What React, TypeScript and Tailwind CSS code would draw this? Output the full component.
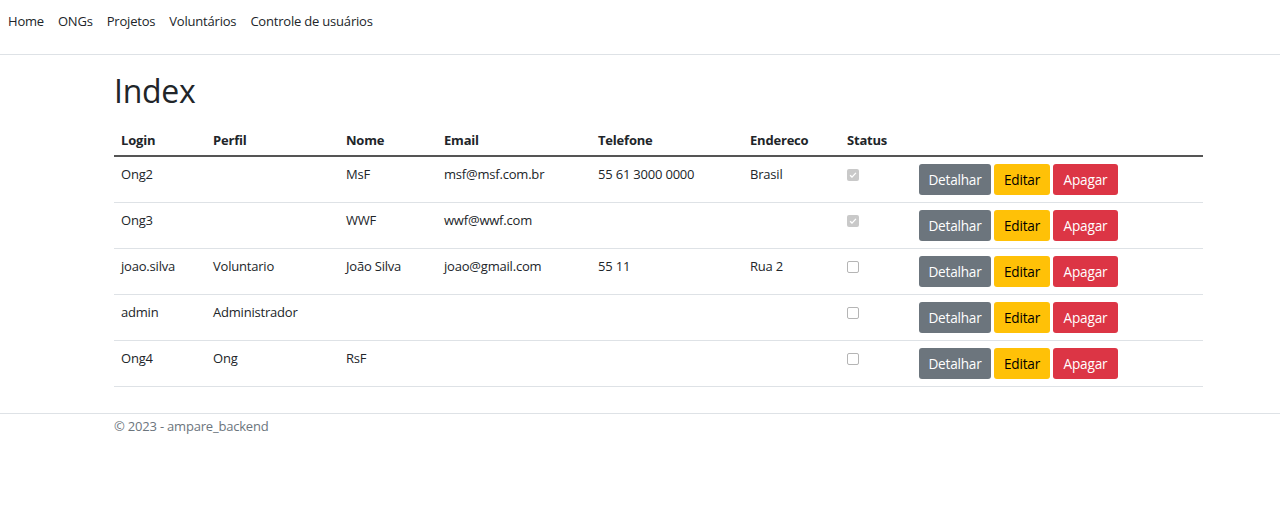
const rows = [
  { login: "Ong2", perfil: "", nome: "MsF", email: "msf@msf.com.br", tel: "55 61 3000 0000", end: "Brasil", ok: true },
  { login: "Ong3", perfil: "", nome: "WWF", email: "wwf@wwf.com", tel: "", end: "", ok: true },
  { login: "joao.silva", perfil: "Voluntario", nome: "João Silva", email: "joao@gmail.com", tel: "55 11", end: "Rua 2", ok: false },
  { login: "admin", perfil: "Administrador", nome: "", email: "", tel: "", end: "", ok: false },
  { login: "Ong4", perfil: "Ong", nome: "RsF", email: "", tel: "", end: "", ok: false },
];

function Check({ on }: { on: boolean }) {
  if (on) {
    return (
      <span className="mt-[5px] flex h-[12px] w-[12px] items-center justify-center rounded-[2px] bg-[#c9c9c9]">
        <svg viewBox="0 0 12 12" className="h-[10px] w-[10px]">
          <path d="M2.5 6.2l2.3 2.3 4.7-5" fill="none" stroke="#fff" strokeWidth="1.6" />
        </svg>
      </span>
    );
  }
  return <span className="mt-[5px] block h-[12px] w-[12px] rounded-[2px] border border-[#b5b5b5] bg-white" />;
}

export default function App() {
  return (
    <div className="min-h-screen bg-white text-[13px] leading-[1.55] tracking-[-0.2px] text-[#212529]" style={{ fontFamily: '"Open Sans", "Noto Sans", sans-serif' }}>
      {/* Nav */}
      <nav className="flex h-[55px] items-start border-b border-[#dee2e6] pl-[1px] pt-[11px]">
        {["Home", "ONGs", "Projetos", "Voluntários", "Controle de usuários"].map((l) => (
          <a key={l} className="px-[7px] text-[#212529]">
            {l}
          </a>
        ))}
      </nav>

      <main className="ml-[114px] w-[1089px] pt-[16px]">
        <h1 className="mb-[16px] text-[32px] leading-[1.25] font-normal tracking-[-0.3px]">Index</h1>

        <table className="w-full table-fixed border-collapse">
          <colgroup>
            <col className="w-[92px]" />
            <col className="w-[133px]" />
            <col className="w-[98px]" />
            <col className="w-[154px]" />
            <col className="w-[152px]" />
            <col className="w-[97px]" />
            <col className="w-[72px]" />
            <col />
          </colgroup>
          <thead>
            <tr className="border-b-2 border-[#555]">
              {["Login", "Perfil", "Nome", "Email", "Telefone", "Endereco", "Status", ""].map((h, i) => (
                <th key={i} className="px-[7px] pt-[3px] pb-[5px] text-left font-bold">
                  {h}
                </th>
              ))}
            </tr>
          </thead>
          <tbody>
            {rows.map((r) => (
              <tr key={r.login} className="border-b border-[#dee2e6] align-top">
                <td className="px-[7px] py-[7px]">{r.login}</td>
                <td className="px-[7px] py-[7px]">{r.perfil}</td>
                <td className="px-[7px] py-[7px]">{r.nome}</td>
                <td className="px-[7px] py-[7px]">{r.email}</td>
                <td className="px-[7px] py-[7px]">{r.tel}</td>
                <td className="px-[7px] py-[7px]">{r.end}</td>
                <td className="px-[7px] py-[7px]">
                  <Check on={r.ok} />
                </td>
                <td className="px-[7px] py-[7px]">
                  <div className="flex gap-[3px]">
                    <button className="flex h-[31px] w-[72px] items-center justify-center rounded-[3px] bg-[#6c757d] text-[13.6px] text-white">Detalhar</button>
                    <button className="flex h-[31px] w-[56px] items-center justify-center rounded-[3px] bg-[#ffc107] text-[13.6px] text-black">Editar</button>
                    <button className="flex h-[31px] w-[65px] items-center justify-center rounded-[3px] bg-[#dc3545] text-[13.6px] text-white">Apagar</button>
                  </div>
                </td>
              </tr>
            ))}
          </tbody>
        </table>
      </main>

      <footer className="mt-[26px] border-t border-[#dee2e6] pt-[2px]">
        <div className="ml-[114px] text-[#6c757d]">© 2023 - ampare_backend</div>
      </footer>
    </div>
  );
}
